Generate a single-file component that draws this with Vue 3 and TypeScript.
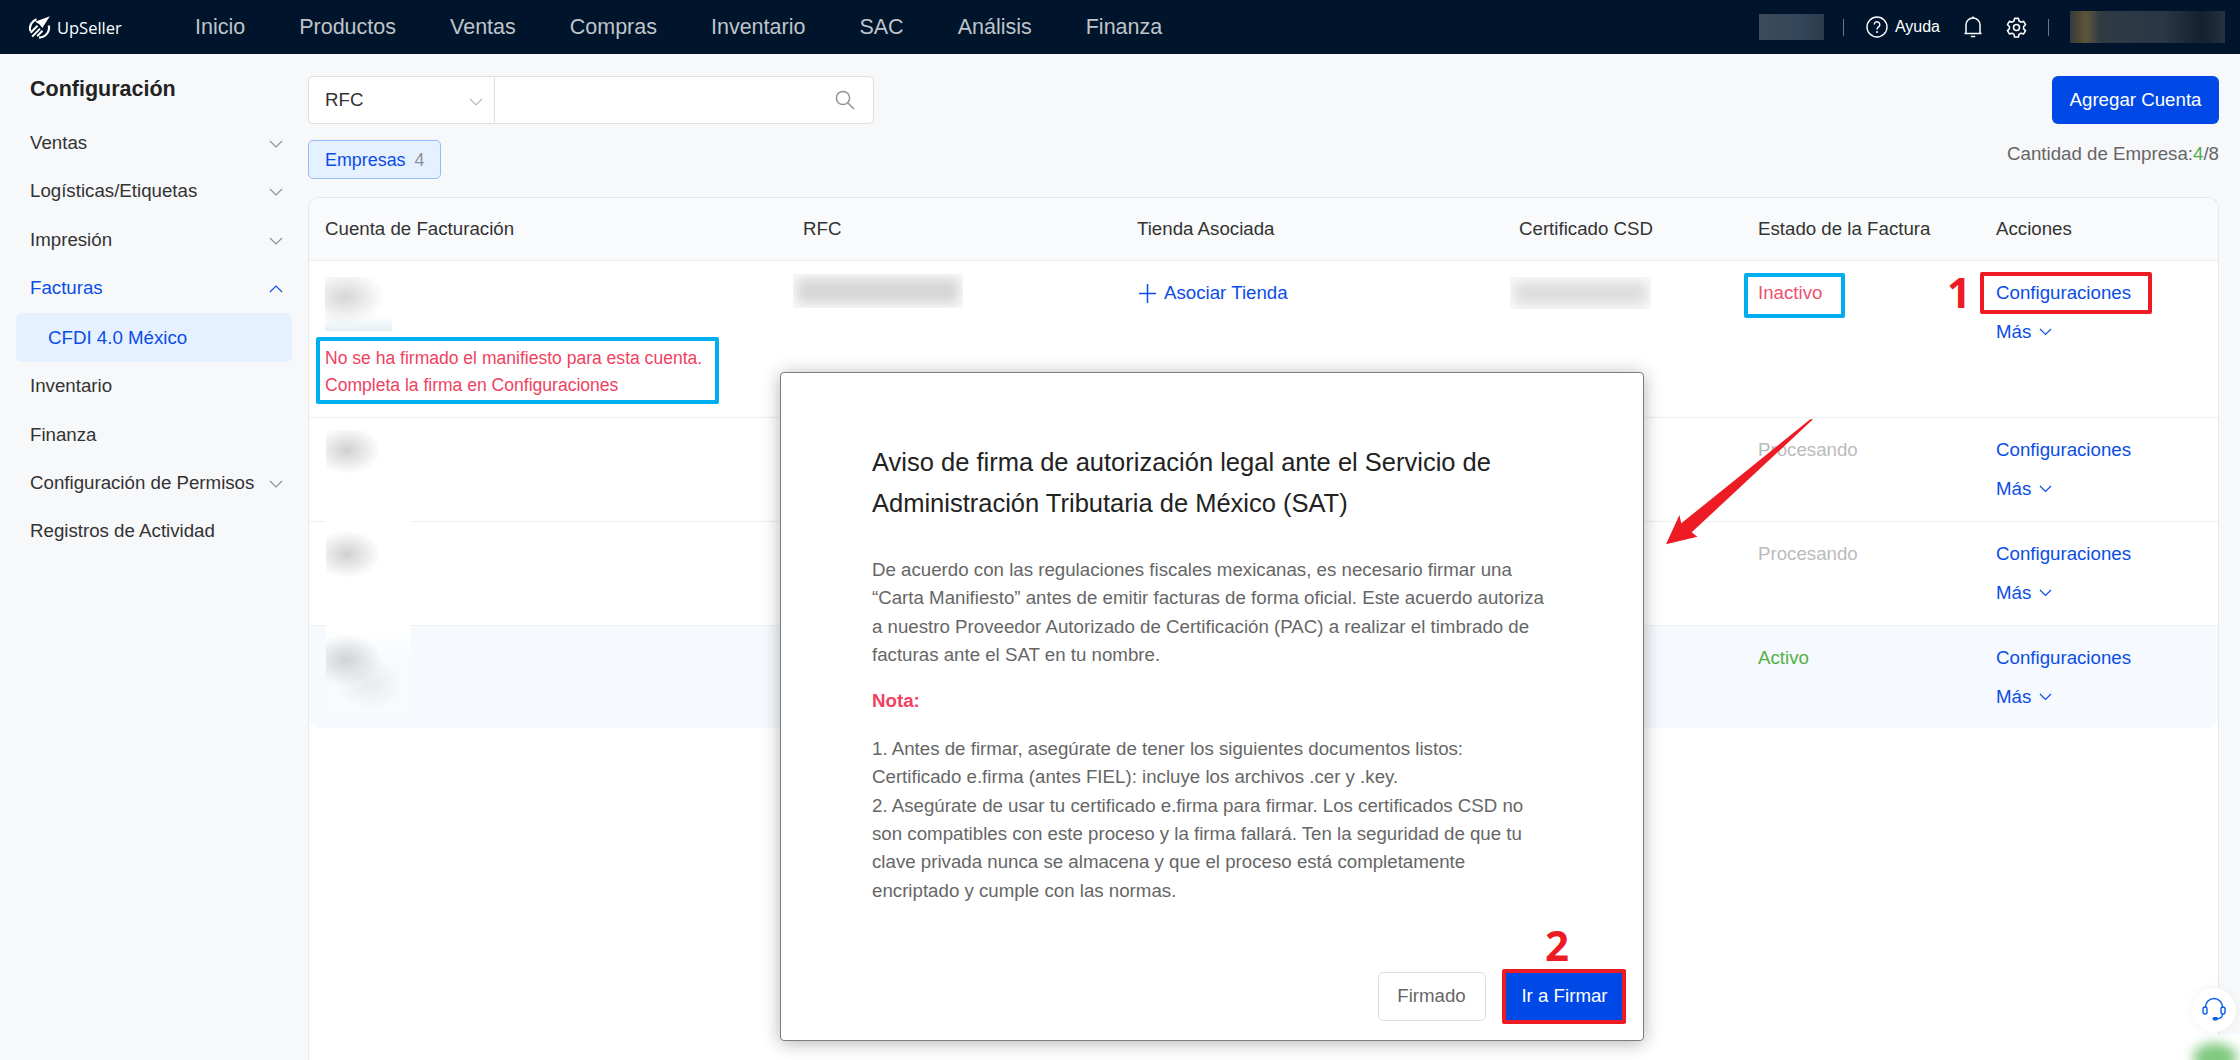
<template>
  <div class="page">
    <header class="topbar">
      <div class="brand">
        <svg class="brand-icon" width="25" height="25" viewBox="0 0 25 25" fill="none">
          <path d="M9.5 4.2A10 10 0 0 0 3.2 16" stroke="#fff" stroke-width="2.2" />
          <path d="M21.8 10.5A10 10 0 0 1 12 22.6" stroke="#fff" stroke-width="2.2" />
          <path d="M22.8 1.2 8.2 6.8l4.2 2.4 3 3.8z" fill="#fff" />
          <path d="M10.5 10.8 3.6 17.8M13 13.6 5.2 21.6M15.5 15.8 10.2 21.2" stroke="#fff" stroke-width="2" />
        </svg>
        <span class="brand-name">UpSeller</span>
      </div>
      <nav class="topnav">
        <a v-for="item in navItems" :key="item">{{ item }}</a>
      </nav>
      <div class="top-right">
        <div class="blur-chip" />
        <span class="top-sep" />
        <svg class="help-icon" width="22" height="22" viewBox="0 0 22 22" fill="none">
          <circle cx="11" cy="11" r="10" stroke="#fff" stroke-width="1.4" />
          <path d="M8.2 8.6a2.8 2.8 0 1 1 4.4 2.3c-1 .7-1.6 1.2-1.6 2.5" stroke="#fff" stroke-width="1.4" />
          <circle cx="11" cy="16" r="1" fill="#fff" />
        </svg>
        <span class="help-label">Ayuda</span>
        <svg class="bell-icon" width="18" height="22" viewBox="0 0 18 22" fill="none">
          <path d="M2 17V9a7 7 0 0 1 14 0v8M.5 17.5h17" stroke="#fff" stroke-width="1.5" />
          <path d="M9 .6v1.6M6.8 20.4h4.4" stroke="#fff" stroke-width="1.5" />
        </svg>
        <svg class="gear-icon" width="21" height="21" viewBox="0 0 24 24" fill="none">
          <path
            d="M9.8 1.6h4.4l.7 3 2.2 1.3 3-.9 2.2 3.8-2.2 2.1v2.6l2.2 2.1-2.2 3.8-3-.9-2.2 1.3-.7 3H9.8l-.7-3-2.2-1.3-3 .9-2.2-3.8 2.2-2.1v-2.6L1.7 8.8 3.9 5l3 .9 2.2-1.3z"
            stroke="#fff"
            stroke-width="1.8"
            stroke-linejoin="round"
          />
          <circle cx="12" cy="12" r="3.4" stroke="#fff" stroke-width="1.8" />
        </svg>
        <span class="top-sep top-sep-2" />
        <div class="blur-user" />
      </div>
    </header>

    <div class="body">
      <aside class="sidebar">
        <h2 class="side-title">Configuración</h2>
        <ul class="side-menu">
          <li
            v-for="item in menu"
            :key="item.label"
            class="side-item"
            :class="{ 'is-open': item.open, 'is-sub': item.sub }"
          >
            <span>{{ item.label }}</span>
            <svg v-if="item.arrow" class="side-arrow" width="14" height="8" viewBox="0 0 14 8" fill="none">
              <path :d="item.open ? 'M1 7l6-6 6 6' : 'M1 1l6 6 6-6'" stroke="currentColor" stroke-width="1.1" />
            </svg>
          </li>
        </ul>
      </aside>

      <main class="content">
        <div class="toolbar">
          <div class="search">
            <div class="search-select">
              <span>RFC</span>
              <svg width="14" height="8" viewBox="0 0 14 8" fill="none">
                <path d="M1 1l6 6 6-6" stroke="#b5b8bd" stroke-width="1.1" />
              </svg>
            </div>
            <div class="search-input">
              <svg width="22" height="22" viewBox="0 0 22 22" fill="none">
                <circle cx="9" cy="9" r="6.6" stroke="#8f939a" stroke-width="1.5" />
                <path d="M14 14l6 6" stroke="#8f939a" stroke-width="1.5" />
              </svg>
            </div>
          </div>
          <button class="btn-add">Agregar Cuenta</button>
        </div>

        <div class="filter-row">
          <div class="tab">Empresas <em>4</em></div>
          <div class="count">Cantidad de Empresa:<i>4</i>/8</div>
        </div>

        <section class="card">
          <div class="row head">
            <div v-for="col in columns" :key="col">{{ col }}</div>
          </div>

          <div
            v-for="(row, i) in rows"
            :key="i"
            class="row"
            :class="[`row-${i + 1}`, { 'is-hover': i === 3 }]"
          >
            <div class="cell-account">
              <template v-if="row.warn">
                <div class="blur-name" />
                <p class="warn">No se ha firmado el manifiesto para esta cuenta.</p>
                <p class="warn">Completa la firma en Configuraciones</p>
              </template>
              <div v-else class="blur-patch" />
            </div>
            <div><div v-if="row.warn" class="blur-rfc" /></div>
            <div>
              <a v-if="row.warn" class="link assoc">
                <svg width="17" height="19" viewBox="0 0 17 19" fill="none">
                  <path d="M8.5 0v19M0 9.5h17" stroke="currentColor" stroke-width="1.5" />
                </svg>
                Asociar Tienda
              </a>
            </div>
            <div><div v-if="row.warn" class="blur-csd" /></div>
            <div :class="`status-${row.state}`">{{ row.status }}</div>
            <div class="actions">
              <a class="link">Configuraciones</a>
              <a class="link more">
                Más
                <svg width="13" height="8" viewBox="0 0 13 8" fill="none">
                  <path d="M1 1l5.5 5.5L12 1" stroke="currentColor" stroke-width="1.2" />
                </svg>
              </a>
            </div>
          </div>
        </section>
      </main>
    </div>

    <div class="modal">
      <h3 class="modal-title">
        Aviso de firma de autorización legal ante el Servicio de<br />
        Administración Tributaria de México (SAT)
      </h3>
      <p class="modal-text">
        De acuerdo con las regulaciones fiscales mexicanas, es necesario firmar una<br />
        “Carta Manifiesto” antes de emitir facturas de forma oficial. Este acuerdo autoriza<br />
        a nuestro Proveedor Autorizado de Certificación (PAC) a realizar el timbrado de<br />
        facturas ante el SAT en tu nombre.
      </p>
      <p class="modal-note">Nota:</p>
      <p class="modal-text modal-list">
        1. Antes de firmar, asegúrate de tener los siguientes documentos listos:<br />
        Certificado e.firma (antes FIEL): incluye los archivos .cer y .key.<br />
        2. Asegúrate de usar tu certificado e.firma para firmar. Los certificados CSD no<br />
        son compatibles con este proceso y la firma fallará. Ten la seguridad de que tu<br />
        clave privada nunca se almacena y que el proceso está completamente<br />
        encriptado y cumple con las normas.
      </p>
      <div class="modal-actions">
        <button class="btn-ghost">Firmado</button>
        <button class="btn-go">Ir a Firmar</button>
      </div>
    </div>

    <!-- tutorial marks drawn over the screenshot -->
    <div class="mark mark-blue mark-warn" />
    <div class="mark mark-blue mark-status" />
    <div class="mark mark-red mark-config" />
    <div class="mark mark-red mark-go" />
    <span class="step step-1">1</span>
    <span class="step step-2">2</span>
    <svg class="arrow" width="160" height="135" viewBox="0 0 160 135">
      <path d="M149 2.3 27.7 115.3l5.7 4.4L2 127.3 15.4 98l1.9 8.3L146.3 2.3z" fill="#ed1c24" />
    </svg>

    <div class="support">
      <svg width="24" height="26" viewBox="0 0 24 26" fill="none">
        <path d="M3.5 11V10a8.5 8.5 0 0 1 17 0v1" stroke="#0b5fe8" stroke-width="1.5" />
        <rect x="1" y="10" width="4" height="7" rx="2" stroke="#0b5fe8" stroke-width="1.4" />
        <rect x="19" y="10" width="4" height="7" rx="2" stroke="#0b5fe8" stroke-width="1.4" />
        <path d="M20.5 17c0 3-2 4.5-5 4.8" stroke="#0b5fe8" stroke-width="1.4" />
        <rect x="10.5" y="20" width="5.5" height="3.4" rx="1.7" fill="#0b5fe8" />
      </svg>
    </div>
    <div class="corner"><span class="corner-blob" /></div>
  </div>
</template>

<script setup lang="ts">
interface MenuItem {
  label: string
  arrow?: boolean
  open?: boolean
  sub?: boolean
}

interface Row {
  status: string
  state: 'off' | 'wait' | 'on'
  warn?: boolean
}

const navItems = ['Inicio', 'Productos', 'Ventas', 'Compras', 'Inventario', 'SAC', 'Análisis', 'Finanza']

const menu: MenuItem[] = [
  { label: 'Ventas', arrow: true },
  { label: 'Logísticas/Etiquetas', arrow: true },
  { label: 'Impresión', arrow: true },
  { label: 'Facturas', arrow: true, open: true },
  { label: 'CFDI 4.0 México', sub: true },
  { label: 'Inventario' },
  { label: 'Finanza' },
  { label: 'Configuración de Permisos', arrow: true },
  { label: 'Registros de Actividad' },
]

const columns = [
  'Cuenta de Facturación',
  'RFC',
  'Tienda Asociada',
  'Certificado CSD',
  'Estado de la Factura',
  'Acciones',
]

const rows: Row[] = [
  { status: 'Inactivo', state: 'off', warn: true },
  { status: 'Procesando', state: 'wait' },
  { status: 'Procesando', state: 'wait' },
  { status: 'Activo', state: 'on' },
]
</script>

<style>
body {
  margin: 0;
  background: #f7f8fa;
}
</style>

<style scoped>
.page {
  position: relative;
  width: 2240px;
  height: 1060px;
  overflow: hidden;
  background: #f7f8fa;
  font-family: 'Liberation Sans', Arial, sans-serif;
  font-size: 18.7px;
  color: #333;
}

.topbar {
  height: 54px;
  background: #00152b;
  display: flex;
  align-items: center;
  padding-left: 27px;
}
.brand {
  display: flex;
  align-items: center;
  gap: 5px;
  width: 168px;
}
.brand-name {
  font-family: 'Open Sans', sans-serif;
  font-size: 16.5px;
  font-weight: 500;
  color: #fff;
}
.topnav {
  display: flex;
  gap: 54px;
  font-size: 21.5px;
  color: #bfc4ca;
}
.top-right {
  margin-left: auto;
  display: flex;
  align-items: center;
  height: 100%;
  padding-right: 15px;
}
.blur-chip {
  width: 65px;
  height: 26px;
  background: linear-gradient(90deg, #3d4b5a, #34465a 60%, #2c3c4e);
}
.top-sep {
  width: 1px;
  height: 17px;
  margin-left: 19px;
  background: #6b7683;
}
.help-icon {
  margin-left: 22px;
}
.help-label {
  margin-left: 7px;
  font-size: 16px;
  color: #fff;
}
.bell-icon {
  margin-left: 24px;
}
.gear-icon {
  margin-left: 24px;
}
.top-sep-2 {
  margin-left: 21px;
}
.blur-user {
  width: 155px;
  height: 32px;
  margin-left: 21px;
  background: linear-gradient(90deg, #35393a, #5f5638 10%, #2f3a44 20%, #2a3744 60%, #122030 85%, #25323f);
}

.body {
  display: flex;
  height: 1006px;
}

.sidebar {
  width: 308px;
  flex-shrink: 0;
  padding-top: 22px;
  box-sizing: border-box;
}
.side-title {
  margin: 0 0 17px 30px;
  font-size: 21.5px;
  line-height: 26px;
  font-weight: 700;
  color: #222;
}
.side-menu {
  margin: 0;
  padding: 0;
  list-style: none;
}
.side-item {
  height: 48.3px;
  padding: 0 25px 0 30px;
  display: flex;
  align-items: center;
  justify-content: space-between;
  color: #333;
}
.side-arrow {
  color: #8b8f96;
  margin-top: 2px;
}
.side-item.is-open {
  color: #0a4de6;
}
.side-item.is-open .side-arrow {
  color: #0a4de6;
}
.side-item.is-sub {
  height: 49px;
  margin: 1px 16px 0;
  padding-left: 32px;
  border-radius: 6px;
  background: #e6f1ff;
  color: #0a4de6;
}

.content {
  flex: 1;
  min-width: 0;
  padding: 22px 21px 0 0;
  display: flex;
  flex-direction: column;
}
.toolbar {
  display: flex;
  justify-content: space-between;
}
.search {
  width: 566px;
  height: 48px;
  box-sizing: border-box;
  display: flex;
  background: #fff;
  border: 1px solid #dcdee2;
  border-radius: 5px;
}
.search-select {
  width: 186px;
  padding: 0 16px;
  box-sizing: border-box;
  border-right: 1px solid #dcdee2;
  display: flex;
  align-items: center;
  justify-content: space-between;
}
.search-select svg {
  margin: 3px -5px 0 0;
}
.search-input {
  flex: 1;
  padding-right: 17px;
  display: flex;
  align-items: center;
  justify-content: flex-end;
}
.btn-add {
  width: 167px;
  height: 48px;
  border: none;
  border-radius: 6px;
  background: #0049e6;
  color: #fff;
  font: inherit;
}

.filter-row {
  display: flex;
  justify-content: space-between;
  align-items: flex-start;
  margin-top: 16px;
  height: 57px;
}
.tab {
  height: 39px;
  width: 133px;
  box-sizing: border-box;
  padding: 2px 0 0 16px;
  display: flex;
  align-items: center;
  border: 1px solid #93bbf8;
  border-radius: 5px;
  background: #e6f1ff;
  color: #0a4de6;
  font-size: 17.9px;
}
.tab em {
  margin-left: 9px;
  font-style: normal;
  color: #8d9096;
}
.count {
  margin-top: 3px;
  color: #666;
  line-height: 22px;
}
.count i {
  font-style: normal;
  color: #4caf50;
}

.card {
  flex: 1;
  background: #fff;
  border: 1px solid #e7e8ea;
  border-bottom: none;
  border-radius: 12px 12px 0 0;
}
.row {
  display: grid;
  grid-template-columns: 478px 334px 382px 239px 238px 1fr;
  padding-left: 16px;
  box-sizing: border-box;
  height: 104px;
  padding-top: 19px;
  line-height: 26px;
  border-bottom: 1px solid #eeeff1;
}
.row.head {
  height: 63px;
  padding-top: 0;
  align-items: center;
  background: #f9fafb;
  border-radius: 12px 12px 0 0;
  color: #333;
}
.row-1 {
  height: 157px;
}
.row-4 {
  height: 102px;
  border-bottom: none;
  border-radius: 0 0 12px 12px;
}
.is-hover {
  background: #f6f9fe;
}

.cell-account {
  position: relative;
}
.blur-name {
  width: 67px;
  height: 54px;
  margin-top: -3px;
  background:
    radial-gradient(ellipse 40px 28px at 20px 20px, #d6d6d6, rgba(224, 224, 224, 0)),
    linear-gradient(rgba(232, 242, 246, 0) 70%, #e6f1f5);
}
.blur-patch {
  position: absolute;
  left: 1px;
  top: -7px;
  width: 85px;
  height: 100px;
  background:
    radial-gradient(ellipse 34px 24px at 21px 20px, #d0d0d0, rgba(214, 214, 214, 0)),
    #fff;
}
.row-3 .blur-patch {
  top: -11px;
  background:
    radial-gradient(ellipse 34px 24px at 21px 24px, #d0d0d0, rgba(214, 214, 214, 0)),
    #fff;
}
.row-4 .blur-patch {
  top: -15px;
  height: 85px;
  background:
    radial-gradient(ellipse 36px 26px at 20px 30px, #cfd2d6, rgba(214, 216, 220, 0)),
    radial-gradient(ellipse 34px 26px at 44px 54px, #e8ebee, rgba(232, 235, 238, 0)),
    linear-gradient(#fff, #f8fbfe 30%);
}
.warn {
  margin: 0;
  font-size: 17.55px;
  line-height: 27px;
  color: #f0415f;
  white-space: nowrap;
}
.blur-name + .warn {
  margin-top: 14px;
}
.blur-rfc,
.blur-csd {
  background: #d6d6d6;
  box-shadow: inset 0 0 12px 4px #fbfbfb;
}
.blur-rfc {
  width: 170px;
  height: 34px;
  margin: -6px 0 0 -10px;
}
.blur-csd {
  width: 141px;
  height: 32px;
  margin: -3px 0 0 -9px;
  background: #dedede;
}

.link {
  color: #0a4de6;
  white-space: nowrap;
}
.assoc {
  display: flex;
  align-items: center;
  gap: 8px;
  margin-left: 2px;
}
.status-off {
  color: #f0506e;
}
.status-wait {
  color: #bbb;
}
.status-on {
  color: #52b043;
}
.actions {
  display: flex;
  flex-direction: column;
  gap: 13px;
}
.more svg {
  margin-left: 2px;
  vertical-align: 2px;
}

.modal {
  position: absolute;
  left: 780px;
  top: 372px;
  width: 864px;
  height: 669px;
  box-sizing: border-box;
  padding: 69px 88px 0 91px;
  background: #fff;
  border: 1.5px solid #7d7d7d;
  border-radius: 4px;
  box-shadow: 0 2px 18px rgba(0, 0, 0, 0.3);
}
.modal-title {
  margin: 0;
  font-size: 25.5px;
  line-height: 41px;
  font-weight: 400;
  color: #222;
  white-space: nowrap;
}
.modal-text {
  margin: 32px 0 0;
  font-size: 18.7px;
  line-height: 28.3px;
  color: #666;
  white-space: nowrap;
}
.modal-note {
  margin: 18px 0 0;
  font-size: 18.7px;
  line-height: 28px;
  font-weight: 700;
  color: #f0415f;
}
.modal-text.modal-list {
  margin-top: 20px;
}
.modal-actions {
  position: absolute;
  right: 17.5px;
  bottom: 17.5px;
  display: flex;
  gap: 18px;
}
.btn-ghost {
  width: 108px;
  height: 49px;
  border: 1px solid #dcdee2;
  border-radius: 5px;
  background: #fff;
  color: #666;
  font: inherit;
}
.btn-go {
  width: 122px;
  height: 53px;
  margin-top: -2px;
  border: none;
  background: #0049e6;
  color: #fff;
  font: inherit;
}

.mark {
  position: absolute;
  box-sizing: border-box;
  border-style: solid;
  border-width: 4px;
  border-radius: 2px;
  pointer-events: none;
}
.mark-blue {
  border-color: #00aeef;
}
.mark-red {
  border-color: #ed1c24;
}
.mark-warn {
  left: 316px;
  top: 337px;
  width: 403px;
  height: 67px;
}
.mark-status {
  left: 1744px;
  top: 273px;
  width: 101px;
  height: 45px;
}
.mark-config {
  left: 1980px;
  top: 272px;
  width: 172px;
  height: 42px;
}
.mark-go {
  left: 1502px;
  top: 969px;
  width: 124px;
  height: 55px;
}
.step {
  position: absolute;
  font-family: 'Open Sans', sans-serif;
  font-weight: 700;
  font-size: 42px;
  line-height: 42px;
  color: #ed1c24;
}
.step-1 {
  left: 1947px;
  top: 271px;
}
.step-2 {
  left: 1545px;
  top: 924px;
}
.arrow {
  position: absolute;
  left: 1664px;
  top: 417px;
}

.support {
  position: absolute;
  left: 2192px;
  top: 988px;
  width: 44px;
  height: 44px;
  border-radius: 50%;
  background: #fff;
  box-shadow: 0 0 10px rgba(0, 0, 0, 0.06);
  display: flex;
  align-items: center;
  justify-content: center;
}
.corner {
  position: absolute;
  left: 2165px;
  top: 1035px;
  width: 75px;
  height: 25px;
  background: #fff;
  overflow: hidden;
}
.corner-blob {
  position: absolute;
  left: 28px;
  top: 8px;
  width: 44px;
  height: 30px;
  border-radius: 50%;
  background: #7fc97f;
  filter: blur(6px);
}
</style>
